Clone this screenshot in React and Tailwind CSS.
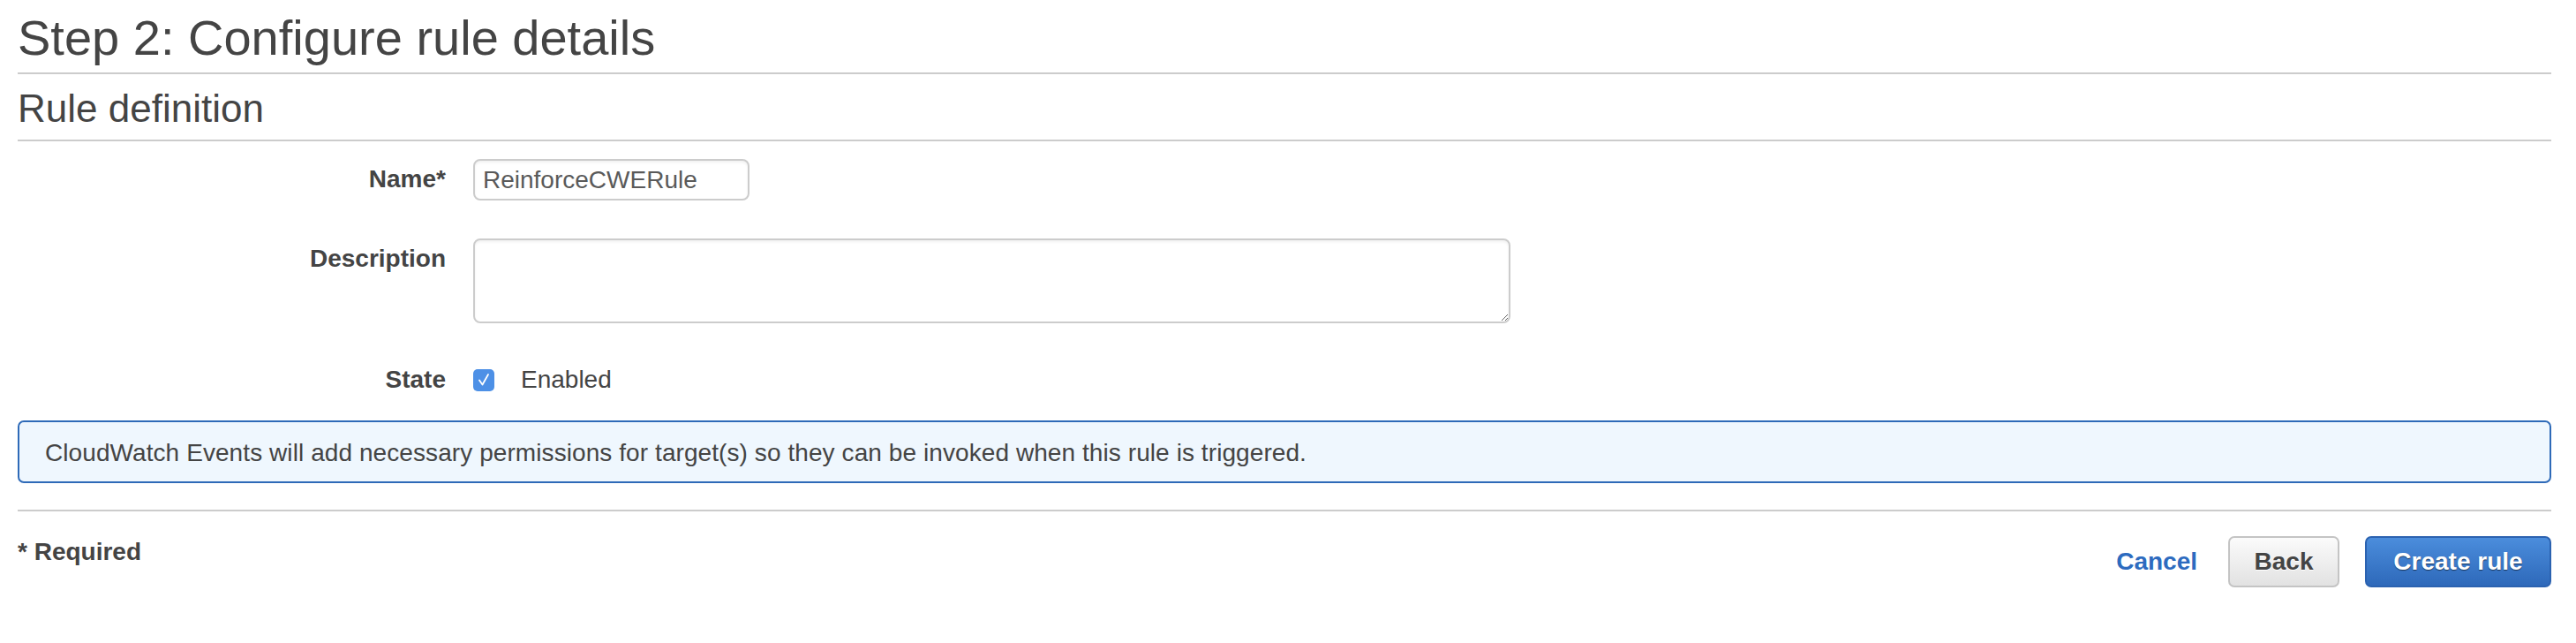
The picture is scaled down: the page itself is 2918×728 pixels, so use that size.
export default function App() {
  return (
    <div className="w-[2918px] h-[728px] bg-white text-[#444] font-['Liberation_Sans',Arial,sans-serif] pl-[20px] pr-[28px]">
      <h1 className="pt-[15px] pb-[11px] text-[56px] leading-[56px] font-normal border-b-2 border-[#ccc]">
        Step 2: Configure rule details
      </h1>
      <h2 className="pt-[17px] pb-[13px] text-[44px] leading-[44px] font-normal border-b-2 border-[#ccc]">
        Rule definition
      </h2>

      <div className="pt-[20px]">
        <div className="flex items-start gap-[31px]">
          <label className="w-[485px] text-right pt-[9px] text-[28px] leading-[28px] font-bold">Name*</label>
          <input
            readOnly
            value="ReinforceCWERule"
            className="w-[313px] h-[47px] border-2 border-[#ccc] rounded-[8px] px-[9px] text-[28px] text-[#5a5a5a] bg-white outline-none shadow-[inset_0_2px_3px_rgba(0,0,0,0.06)] font-['Liberation_Sans',Arial,sans-serif]"
          />
        </div>

        <div className="flex items-start gap-[31px] mt-[43px]">
          <label className="w-[485px] text-right pt-[9px] text-[28px] leading-[28px] font-bold">Description</label>
          <textarea
            readOnly
            className="block w-[1175px] h-[96px] border-2 border-[#ccc] rounded-[8px] bg-white outline-none shadow-[inset_0_2px_3px_rgba(0,0,0,0.06)]"
          />
        </div>

        <div className="flex items-center gap-[31px] mt-[50px] h-[28px]">
          <label className="w-[485px] text-right text-[28px] leading-[28px] font-bold">State</label>
          <div className="flex items-center gap-[30px]">
            <div className="w-[24px] h-[25px] rounded-[5px] bg-[#4d90e6] flex items-center justify-center">
              <svg width="16" height="18" viewBox="0 0 16 18" fill="none">
                <path d="M3 9.5 L6.5 14.5 L13 3" stroke="white" strokeWidth="1.8" strokeLinecap="round" strokeLinejoin="round" />
              </svg>
            </div>
            <span className="text-[28px] leading-[28px]">Enabled</span>
          </div>
        </div>
      </div>

      <div className="mt-[32px] border-2 border-[#2e6ab8] rounded-[7px] bg-[#eff7fe] pl-[29px] pt-[21px] pb-[18px] text-[28px] leading-[28px] tracking-[0.08px]">
        CloudWatch Events will add necessary permissions for target(s) so they can be invoked when this rule is triggered.
      </div>

      <div className="mt-[30px] border-t-2 border-[#ccc]" />

      <div className="mt-[28px] flex justify-between items-start">
        <div className="pt-[4px] text-[28px] leading-[28px] font-bold">* Required</div>
        <div className="flex items-center">
          <span className="text-[28px] leading-[28px] font-bold text-[#2d6bbf]">Cancel</span>
          <button className="ml-[35px] w-[126px] h-[58px] border-2 border-[#c4c4c4] rounded-[7px] bg-gradient-to-b from-[#fbfbfb] to-[#e2e2e2] text-[28px] font-bold text-[#444] [text-shadow:0_1px_0_#fff] font-['Liberation_Sans',Arial,sans-serif]">
            Back
          </button>
          <button className="ml-[29px] w-[211px] h-[58px] border-2 border-[#2b62b0] rounded-[7px] bg-gradient-to-b from-[#4b8ddc] to-[#2e69ba] text-[28px] font-bold text-white [text-shadow:0_1px_1px_rgba(0,0,0,0.55)] font-['Liberation_Sans',Arial,sans-serif]">
            Create rule
          </button>
        </div>
      </div>
    </div>
  );
}
